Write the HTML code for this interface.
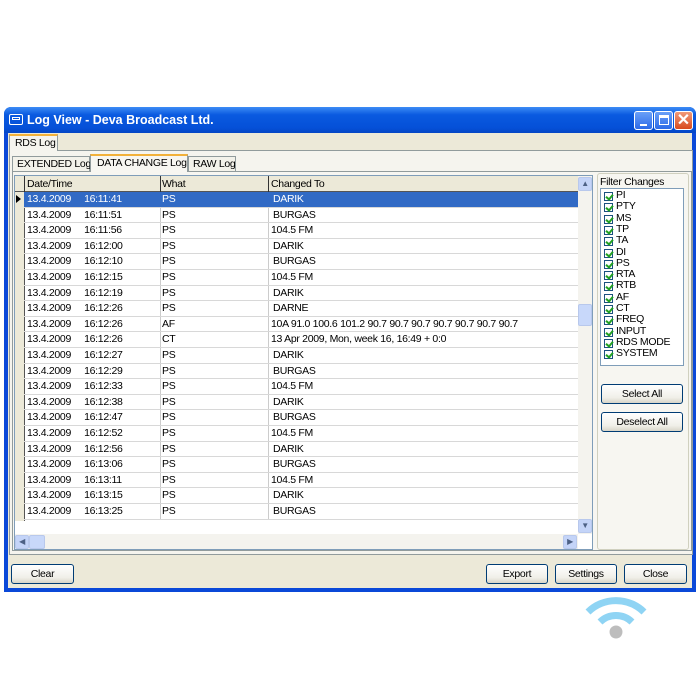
<!DOCTYPE html>
<html><head><meta charset="utf-8"><style>
*{margin:0;padding:0;box-sizing:border-box}
body{width:700px;height:700px;background:#fff;position:relative;overflow:hidden;font-family:"Liberation Sans",sans-serif;font-size:10.5px;color:#000;letter-spacing:-0.3px}
.a{position:absolute;white-space:nowrap}
.win{left:4px;top:107px;width:692px;height:485px;background:#0a48d8;border-radius:7px 7px 0 0}
.title{left:4px;top:107px;width:692px;height:26px;border-radius:7px 7px 0 0;background:linear-gradient(#3d8cf5,#0a5ae0 30%,#0550d8 80%,#0446c4)}
.ttext{left:27px;top:113px;color:#fff;font-weight:bold;font-size:12.5px;letter-spacing:0}
.client{left:8px;top:133px;width:684px;height:455px;background:#ece9d8}
.tb{border:1px solid #fff;border-radius:3px;width:19px;height:19px;top:111px}
.btn{border:1px solid #003c74;border-radius:3px;background:linear-gradient(#fff,#f0efe8 70%,#d8d5c8);text-align:center;line-height:18px;height:20px}
.row{position:absolute;left:0;width:554px;height:15.6px;border-bottom:1px solid #d8d8d8;line-height:15px}
.row span{position:absolute;top:0}
.cb{position:absolute;left:3px;width:9px;height:9px;border:1px solid #1c5180;background:#fff}
.cb:after{content:"";position:absolute;left:2px;top:0px;width:3px;height:5px;border:solid #21a121;border-width:0 2px 2px 0;transform:rotate(40deg)}
.fl{position:absolute;left:15px;line-height:11.3px}
</style></head><body>
<div class="a win"></div>
<div class="a title"></div>
<div class="a" style="left:9px;top:114px;width:14px;height:11px;border:1.5px solid #fff;border-radius:2px"><div style="margin:2px 2px;height:3px;border:1px solid #fff"></div></div>
<div class="a ttext">Log View - Deva Broadcast Ltd.</div>
<div class="a tb" style="left:634px;background:linear-gradient(#6aa0f8,#2c6ae8)"><div style="position:absolute;left:5px;top:12px;width:7px;height:2px;background:#fff"></div></div>
<div class="a tb" style="left:654px;background:linear-gradient(#6aa0f8,#2c6ae8)"><div style="position:absolute;left:4px;top:3px;width:10px;height:10px;border:1.5px solid #fff;border-top-width:3px"></div></div>
<div class="a tb" style="left:674px;background:linear-gradient(#f09a7a,#d84a1e);color:#fff;font-size:16px;font-weight:bold;text-align:center;line-height:17px;letter-spacing:0">✕</div>
<div class="a client"></div>
<div class="a" style="left:9px;top:150px;width:684px;height:405px;border:1px solid #919b9c;background:#f5f4ee"></div>
<div class="a" style="left:9px;top:134px;width:49px;height:17px;border:1px solid #919b9c;border-bottom:none;border-top:2px solid #f2b13a;background:#f5f4ee;padding:1px 5px">RDS Log</div>
<div class="a" style="left:12px;top:171px;width:680px;height:380px;border:1px solid #919b9c;background:#f7f6f1"></div>
<div class="a" style="left:12px;top:156px;width:78px;height:15px;border:1px solid #919b9c;border-bottom:none;background:#f3f2ea;padding:1px 4px">EXTENDED Log</div>
<div class="a" style="left:90px;top:154px;width:98px;height:18px;border:1px solid #919b9c;border-bottom:none;border-top:2px solid #f2b13a;background:#f7f6f1;padding:1px 6px">DATA CHANGE Log</div>
<div class="a" style="left:188px;top:156px;width:48px;height:15px;border:1px solid #919b9c;border-bottom:none;background:#f3f2ea;padding:1px 4px">RAW Log</div>
<div class="a" style="left:14px;top:175px;width:579px;height:375px;border:1px solid #7f9db9;background:#fff"></div>
<div class="a" style="left:15px;top:176px;width:563px;height:16px;background:#ece9d8;border-bottom:1px solid #555"></div>
<div class="a" style="left:24px;top:176px;width:1px;height:16px;background:#333"></div>
<div class="a" style="left:160px;top:176px;width:1px;height:16px;background:#333"></div>
<div class="a" style="left:268px;top:176px;width:1px;height:16px;background:#333"></div>
<div class="a" style="left:27px;top:178px">Date/Time</div>
<div class="a" style="left:162px;top:178px">What</div>
<div class="a" style="left:271px;top:178px">Changed To</div>
<div class="a" style="left:15px;top:192px;width:10px;height:329px;background:#ece9d8"></div>
<div class="a" style="left:24px;top:192px;width:1px;height:329px;background:#555"></div>
<div class="a" style="left:160px;top:192px;width:1px;height:328px;background:#ccc"></div>
<div class="a" style="left:268px;top:192px;width:1px;height:328px;background:#ccc"></div>
<div class="a" style="left:24px;top:192px;width:554px;height:330px">
<div class="row" style="top:0;background:#316ac5;color:#fff"><span style="left:3px">13.4.2009&nbsp;&nbsp;&nbsp;&nbsp;&nbsp;16:11:41</span><span style="left:138px">PS</span><span style="left:249px">DARIK</span></div>
<div class="a" style="left:-8px;top:3px;width:0;height:0;border:4.5px solid transparent;border-left:5px solid #000"></div>
<div class="row" style="top:15.6px"><span style="left:3px">13.4.2009&nbsp;&nbsp;&nbsp;&nbsp;&nbsp;16:11:51</span><span style="left:138px">PS</span><span style="left:249px">BURGAS</span></div>
<div class="row" style="top:31.2px"><span style="left:3px">13.4.2009&nbsp;&nbsp;&nbsp;&nbsp;&nbsp;16:11:56</span><span style="left:138px">PS</span><span style="left:247px">104.5 FM</span></div>
<div class="row" style="top:46.8px"><span style="left:3px">13.4.2009&nbsp;&nbsp;&nbsp;&nbsp;&nbsp;16:12:00</span><span style="left:138px">PS</span><span style="left:249px">DARIK</span></div>
<div class="row" style="top:62.4px"><span style="left:3px">13.4.2009&nbsp;&nbsp;&nbsp;&nbsp;&nbsp;16:12:10</span><span style="left:138px">PS</span><span style="left:249px">BURGAS</span></div>
<div class="row" style="top:78px"><span style="left:3px">13.4.2009&nbsp;&nbsp;&nbsp;&nbsp;&nbsp;16:12:15</span><span style="left:138px">PS</span><span style="left:247px">104.5 FM</span></div>
<div class="row" style="top:93.6px"><span style="left:3px">13.4.2009&nbsp;&nbsp;&nbsp;&nbsp;&nbsp;16:12:19</span><span style="left:138px">PS</span><span style="left:249px">DARIK</span></div>
<div class="row" style="top:109.2px"><span style="left:3px">13.4.2009&nbsp;&nbsp;&nbsp;&nbsp;&nbsp;16:12:26</span><span style="left:138px">PS</span><span style="left:249px">DARNE</span></div>
<div class="row" style="top:124.8px"><span style="left:3px">13.4.2009&nbsp;&nbsp;&nbsp;&nbsp;&nbsp;16:12:26</span><span style="left:138px">AF</span><span style="left:247px">10A 91.0 100.6 101.2 90.7 90.7 90.7 90.7 90.7 90.7 90.7</span></div>
<div class="row" style="top:140.4px"><span style="left:3px">13.4.2009&nbsp;&nbsp;&nbsp;&nbsp;&nbsp;16:12:26</span><span style="left:138px">CT</span><span style="left:247px">13 Apr 2009, Mon, week 16, 16:49 + 0:0</span></div>
<div class="row" style="top:156px"><span style="left:3px">13.4.2009&nbsp;&nbsp;&nbsp;&nbsp;&nbsp;16:12:27</span><span style="left:138px">PS</span><span style="left:249px">DARIK</span></div>
<div class="row" style="top:171.6px"><span style="left:3px">13.4.2009&nbsp;&nbsp;&nbsp;&nbsp;&nbsp;16:12:29</span><span style="left:138px">PS</span><span style="left:249px">BURGAS</span></div>
<div class="row" style="top:187.2px"><span style="left:3px">13.4.2009&nbsp;&nbsp;&nbsp;&nbsp;&nbsp;16:12:33</span><span style="left:138px">PS</span><span style="left:247px">104.5 FM</span></div>
<div class="row" style="top:202.8px"><span style="left:3px">13.4.2009&nbsp;&nbsp;&nbsp;&nbsp;&nbsp;16:12:38</span><span style="left:138px">PS</span><span style="left:249px">DARIK</span></div>
<div class="row" style="top:218.4px"><span style="left:3px">13.4.2009&nbsp;&nbsp;&nbsp;&nbsp;&nbsp;16:12:47</span><span style="left:138px">PS</span><span style="left:249px">BURGAS</span></div>
<div class="row" style="top:234px"><span style="left:3px">13.4.2009&nbsp;&nbsp;&nbsp;&nbsp;&nbsp;16:12:52</span><span style="left:138px">PS</span><span style="left:247px">104.5 FM</span></div>
<div class="row" style="top:249.6px"><span style="left:3px">13.4.2009&nbsp;&nbsp;&nbsp;&nbsp;&nbsp;16:12:56</span><span style="left:138px">PS</span><span style="left:249px">DARIK</span></div>
<div class="row" style="top:265.2px"><span style="left:3px">13.4.2009&nbsp;&nbsp;&nbsp;&nbsp;&nbsp;16:13:06</span><span style="left:138px">PS</span><span style="left:249px">BURGAS</span></div>
<div class="row" style="top:280.8px"><span style="left:3px">13.4.2009&nbsp;&nbsp;&nbsp;&nbsp;&nbsp;16:13:11</span><span style="left:138px">PS</span><span style="left:247px">104.5 FM</span></div>
<div class="row" style="top:296.4px"><span style="left:3px">13.4.2009&nbsp;&nbsp;&nbsp;&nbsp;&nbsp;16:13:15</span><span style="left:138px">PS</span><span style="left:249px">DARIK</span></div>
<div class="row" style="top:312px"><span style="left:3px">13.4.2009&nbsp;&nbsp;&nbsp;&nbsp;&nbsp;16:13:25</span><span style="left:138px">PS</span><span style="left:249px">BURGAS</span></div>
</div>
<div class="a" style="left:578px;top:176px;width:14px;height:358px;background:#f4f3ee"></div>
<div class="a" style="left:578px;top:177px;width:14px;height:14px;border:1px solid #b8c8ec;border-radius:2px;background:#c4d4f8;font-size:8px;text-align:center;line-height:12px;color:#4d6185">▲</div>
<div class="a" style="left:578px;top:304px;width:14px;height:22px;border:1px solid #b8c8ec;border-radius:2px;background:#c8d8fa"></div>
<div class="a" style="left:578px;top:519px;width:14px;height:14px;border:1px solid #b8c8ec;border-radius:2px;background:#c4d4f8;font-size:8px;text-align:center;line-height:12px;color:#4d6185">▼</div>
<div class="a" style="left:15px;top:534px;width:563px;height:15px;background:#f4f3ee"></div>
<div class="a" style="left:15px;top:535px;width:14px;height:14px;border:1px solid #b8c8ec;border-radius:2px;background:#c4d4f8;font-size:8px;text-align:center;line-height:12px;color:#4d6185">◀</div>
<div class="a" style="left:29px;top:535px;width:16px;height:14px;border:1px solid #b8c8ec;border-radius:2px;background:#c8d8fa"></div>
<div class="a" style="left:563px;top:535px;width:14px;height:14px;border:1px solid #b8c8ec;border-radius:2px;background:#c4d4f8;font-size:8px;text-align:center;line-height:12px;color:#4d6185">▶</div>
<div class="a" style="left:597px;top:173px;width:92px;height:377px;border:1px solid #d0d0bf;border-radius:3px;background:#f7f6f1"></div>
<div class="a" style="left:600px;top:176px">Filter Changes</div>
<div class="a" style="left:600px;top:188px;width:84px;height:178px;border:1px solid #7f9db9;background:#fff">
<div class="cb" style="top:3px"></div><div class="fl" style="top:1px">PI</div>
<div class="cb" style="top:14.3px"></div><div class="fl" style="top:12.3px">PTY</div>
<div class="cb" style="top:25.6px"></div><div class="fl" style="top:23.6px">MS</div>
<div class="cb" style="top:36.9px"></div><div class="fl" style="top:34.9px">TP</div>
<div class="cb" style="top:48.2px"></div><div class="fl" style="top:46.2px">TA</div>
<div class="cb" style="top:59.5px"></div><div class="fl" style="top:57.5px">DI</div>
<div class="cb" style="top:70.8px"></div><div class="fl" style="top:68.8px">PS</div>
<div class="cb" style="top:82.1px"></div><div class="fl" style="top:80.1px">RTA</div>
<div class="cb" style="top:93.4px"></div><div class="fl" style="top:91.4px">RTB</div>
<div class="cb" style="top:104.7px"></div><div class="fl" style="top:102.7px">AF</div>
<div class="cb" style="top:116px"></div><div class="fl" style="top:114px">CT</div>
<div class="cb" style="top:127.3px"></div><div class="fl" style="top:125.3px">FREQ</div>
<div class="cb" style="top:138.6px"></div><div class="fl" style="top:136.6px">INPUT</div>
<div class="cb" style="top:149.9px"></div><div class="fl" style="top:147.9px">RDS MODE</div>
<div class="cb" style="top:161.2px"></div><div class="fl" style="top:159.2px">SYSTEM</div>
</div>
<div class="a btn" style="left:601px;top:384px;width:82px">Select All</div>
<div class="a btn" style="left:601px;top:412px;width:82px">Deselect All</div>
<div class="a btn" style="left:11px;top:564px;width:63px">Clear</div>
<div class="a btn" style="left:486px;top:564px;width:62px">Export</div>
<div class="a btn" style="left:555px;top:564px;width:62px">Settings</div>
<div class="a btn" style="left:624px;top:564px;width:63px">Close</div>
<svg class="a" style="left:580px;top:590px" width="72" height="62" viewBox="0 0 72 62">
<path d="M8 22 A40 40 0 0 1 64 22" stroke="#8fd4f4" stroke-width="7" fill="none"/>
<path d="M20 32 A23 23 0 0 1 52 32" stroke="#8fd4f4" stroke-width="7" fill="none"/>
<circle cx="36" cy="42" r="6.5" fill="#bdbdbd"/>
</svg>
</body></html>
